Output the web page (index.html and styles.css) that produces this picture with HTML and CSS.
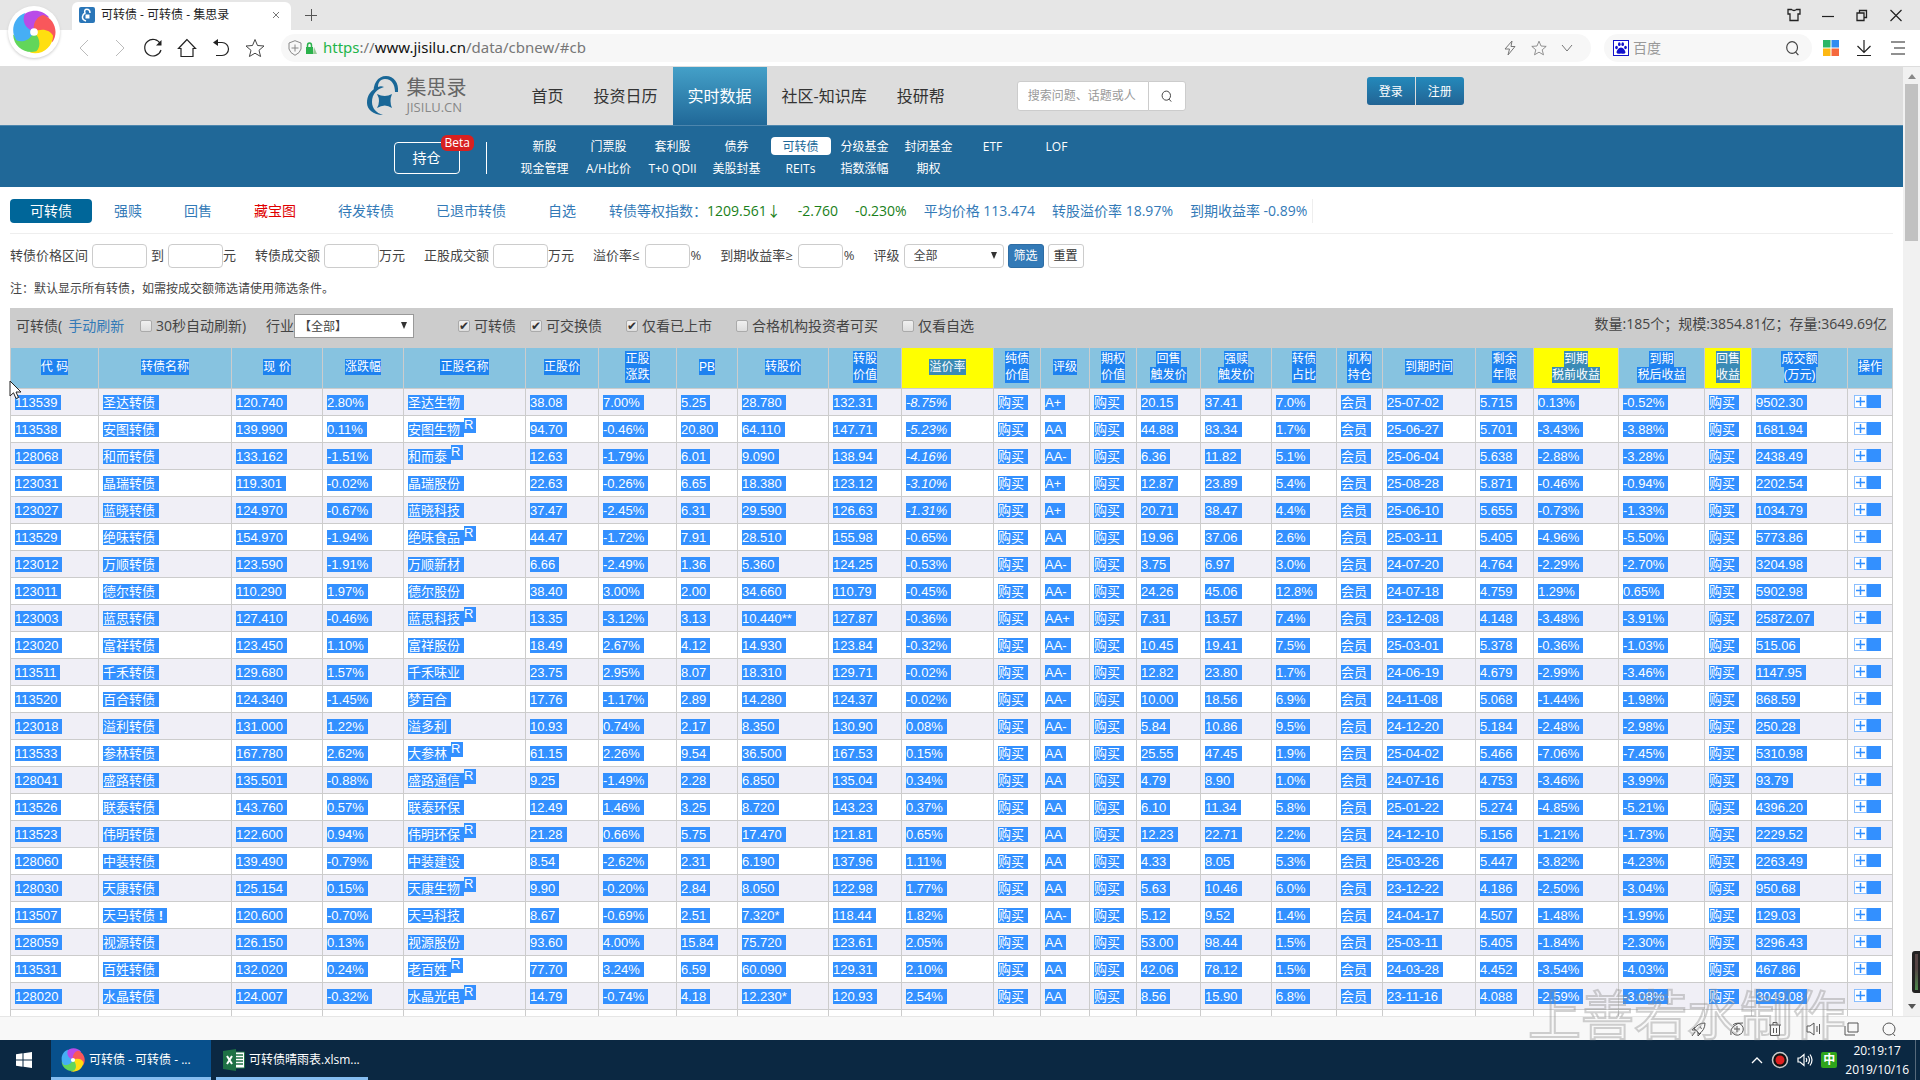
FILE: index.html
```html
<!DOCTYPE html>
<html lang="zh-CN">
<head>
<meta charset="utf-8">
<title>可转债 - 可转债 - 集思录</title>
<link rel="stylesheet" href="styles.css">
</head>
<body>
<svg width="0" height="0" class="defs" aria-hidden="true">
  <symbol id="wheel" viewBox="-20 -20 40 40">
    <g>
      <path fill="#b94be8" d="M0 0C-8-1-13-7-12-13C-6-21 7-22 14-13C7-14 1-10 0 0Z"/>
      <path fill="#f9575b" transform="rotate(72)" d="M0 0C-8-1-13-7-12-13C-6-21 7-22 14-13C7-14 1-10 0 0Z"/>
      <path fill="#ffdf10" transform="rotate(144)" d="M0 0C-8-1-13-7-12-13C-6-21 7-22 14-13C7-14 1-10 0 0Z"/>
      <path fill="#62d65a" transform="rotate(216)" d="M0 0C-8-1-13-7-12-13C-6-21 7-22 14-13C7-14 1-10 0 0Z"/>
      <path fill="#46aef5" transform="rotate(288)" d="M0 0C-8-1-13-7-12-13C-6-21 7-22 14-13C7-14 1-10 0 0Z"/>
    </g>
    <circle r="3.500" fill="#fff"/>
  </symbol>
  <symbol id="mark" viewBox="0 0 32 40">
    <path fill="currentColor" d="M7 19C5 8 11 0 19 0C27 0 32 7 31 16L28 16C28 9 25 3 18 3C13 3 11 7 11 11C13 10 15 10 17 11C10 13 5 18 5 26C5 32 9 37 16 39C6 39 0 33 0 27C0 20 3 16 7 13Z"/>
    <path fill="currentColor" d="M10 18Q18 22 25 18Q22 25 25 32Q18 27 10 32Q14 25 10 18Z"/>
  </symbol>
  <symbol id="star" viewBox="0 0 20 20"><path fill="none" stroke="currentColor" d="M10 1.500L12.500 7.500L19 8L14 12.300L15.600 18.500L10 15.200L4.400 18.500L6 12.300L1 8L7.500 7.500Z"/></symbol>
  <symbol id="search" viewBox="0 0 20 20"><path fill="none" stroke="currentColor" stroke-width="1.300" d="M9 3A6 6.500 0 1 0 9 16A6 6.500 0 1 0 9 3ZM13 14.500L16 18"/></symbol>
</svg>

<header class="chrome">
  <div class="tabstrip">
    <div class="tab">
      <svg class="favicon" viewBox="0 0 16 16"><rect width="16" height="16" rx="2" fill="#2a76b8"/><path fill="none" stroke="#fff" stroke-width="1.500" d="M7 14C1 12 4 7 6 6C4 1 11 1 11 6"/><path fill="#fff" d="M6.500 7.500H10.500V11.500H6.500Z"/></svg>
      <span class="tab-title">可转债 - 可转债 - 集思录</span>
      <button class="icon-btn small" aria-label="关闭标签"><svg width="8" height="8" viewBox="0 0 8 8"><path stroke="#777" d="M1 1L7 7M7 1L1 7"/></svg></button>
    </div>
    <button class="icon-btn plus" aria-label="新标签"><svg width="12" height="12" viewBox="0 0 12 12"><path stroke="#555" d="M0 6.500H12M6.500 0V12"/></svg></button>
    <div class="window-buttons">
      <button class="icon-btn" aria-label="皮肤"><svg width="14" height="14" viewBox="0 0 14 14"><path fill="none" stroke="#222" stroke-width="1.300" d="M1 1.500H4.500Q7 3.500 9.500 1.500H13V6H11V12.500H3V6H1Z"/></svg></button>
      <button class="icon-btn" aria-label="最小化"><svg width="14" height="14" viewBox="0 0 14 14"><path stroke="#222" stroke-width="1.200" d="M1 8.500H13"/></svg></button>
      <button class="icon-btn" aria-label="还原"><svg width="14" height="14" viewBox="0 0 14 14"><path fill="none" stroke="#222" stroke-width="1.300" d="M2 5H9V12.500H2ZM4.500 5V2.500H11.500V9.500H9"/></svg></button>
      <button class="icon-btn" aria-label="关闭"><svg width="14" height="14" viewBox="0 0 14 14"><path stroke="#222" stroke-width="1.200" d="M1.500 2L12.500 13M12.500 2L1.500 13"/></svg></button>
    </div>
  </div>
  <div class="toolbar">
    <div class="nav-icons">
      <button class="icon-btn" aria-label="后退"><svg width="20" height="20" viewBox="0 0 20 20"><path fill="none" stroke="#bbb" d="M13 2L5 10L13 18"/></svg></button>
      <button class="icon-btn" aria-label="前进"><svg width="20" height="20" viewBox="0 0 20 20"><path fill="none" stroke="#bbb" d="M7 2L15 10L7 18"/></svg></button>
      <button class="icon-btn" aria-label="刷新"><svg width="20" height="20" viewBox="0 0 20 20"><path fill="none" stroke="#222" stroke-width="1.200" d="M17.500 6A8.300 8.300 0 1 0 18 12"/><path fill="#222" d="M18.500 2V7.500H13Z"/></svg></button>
      <button class="icon-btn" aria-label="主页"><svg width="20" height="20" viewBox="0 0 20 20"><path fill="none" stroke="#222" stroke-width="1.200" d="M10 1.500L1.500 10.500H4V18.500H16V10.500H18.500Z"/></svg></button>
      <button class="icon-btn" aria-label="恢复"><svg width="20" height="20" viewBox="0 0 20 20"><path fill="none" stroke="#222" stroke-width="1.200" d="M5 4.500H11A6.500 6.500 0 0 1 11 17.500H5"/><path fill="#222" d="M2 4.500L7 1V8Z"/></svg></button>
      <button class="icon-btn" aria-label="收藏"><svg width="20" height="20"><use href="#star"/></svg></button>
    </div>
    <div class="address">
      <svg width="14" height="16" viewBox="0 0 14 16"><path fill="none" stroke="#888" d="M7 .7L13 3V9Q12 13 7 15.300Q2 13 1 9V3ZM7 4.500V11.500M3.500 8H10.500"/></svg>
      <svg width="12" height="14" viewBox="0 0 12 14"><path fill="none" stroke="#2bb24c" stroke-width="1.500" d="M2.500 7V4.500Q2.500 2 4.500 2Q6.500 2 6.500 4.500V7"/><path fill="#2bb24c" d="M1 6H8V13H1Z"/><path fill="#9c9" d="M9 6L12 13H8Z"/></svg>
      <span class="url"><b>https</b>://<i>www.jisilu.cn</i>/data/cbnew/#cb</span>
      <span class="address-tools">
        <svg width="14" height="16" viewBox="0 0 14 16"><path fill="none" stroke="#777" d="M9 1L2 9H6.500L5 15L12 6.500H8Z"/></svg>
        <svg width="16" height="16"><use href="#star"/></svg>
        <svg width="12" height="8" viewBox="0 0 12 8"><path fill="none" stroke="#777" d="M1 1L6 7L11 1"/></svg>
      </span>
    </div>
    <div class="engine">
      <svg width="16" height="16" viewBox="0 0 16 16"><rect x=".5" y=".5" width="15" height="15" fill="#fff" stroke="#11c"/><g fill="#11c"><path d="M8 7.500C10 7.500 12.500 10.500 12.500 12.500Q12 14.500 8 13.500Q4 14.500 3.500 12.500C3.500 10.500 6 7.500 8 7.500Z"/><ellipse cx="3.500" cy="7.500" rx="1.300" ry="1.700"/><ellipse cx="6.300" cy="4.200" rx="1.300" ry="1.900"/><ellipse cx="9.700" cy="4.200" rx="1.300" ry="1.900"/><ellipse cx="12.500" cy="7.500" rx="1.300" ry="1.700"/></g></svg>
      <input type="text" aria-label="百度搜索" placeholder="百度">
      <svg width="18" height="18" class="dark"><use href="#search"/></svg>
    </div>
    <div class="menu-icons">
      <svg width="16" height="16" viewBox="0 0 16 16"><path fill="#2cb666" d="M0 0H7.500V7.500H0Z"/><path fill="#2f8cf0" d="M8.500 0H16V7.500H8.500Z"/><path fill="#fdb813" d="M0 8.500H7.500V16H0Z"/><path fill="#f5683c" d="M8.500 8.500H16V16H8.500Z"/></svg>
      <svg width="16" height="16" viewBox="0 0 16 16"><path fill="none" stroke="#222" stroke-width="1.200" d="M8 0V12M1.500 6L8 12.500L14.500 6M1 15.500H15"/></svg>
      <svg width="14" height="14" viewBox="0 0 14 14"><path stroke="#222" stroke-width="1.200" d="M0 1H14M3 7H14M0 13H14"/></svg>
    </div>
  </div>
  <div class="orb"><svg width="44" height="44"><use href="#wheel"/></svg></div>
</header>

<div class="viewport">
  <div class="page">
    <div class="site-head">
      <div class="container">
        <a class="brand" href="#">
          <svg width="32" height="40"><use href="#mark"/></svg>
          <span><span class="brand-cn">集思录</span><span class="brand-en">JISILU.CN</span></span>
        </a>
        <nav class="main-nav">
          <a href="#">首页</a><a href="#">投资日历</a><a href="#" class="on">实时数据</a><a href="#">社区-知识库</a><a href="#">投研帮</a>
        </nav>
        <form class="site-search">
          <input type="text" aria-label="搜索" placeholder="搜索问题、话题或人">
          <button type="button" aria-label="搜索"><svg width="14" height="14"><use href="#search"/></svg></button>
        </form>
        <div class="auth"><button>登录</button><button>注册</button></div>
      </div>
    </div>
    <div class="sub-head">
      <div class="container">
        <button class="position">持仓<span class="beta">Beta</span></button>
        <nav class="sub-nav">
          <a href="#">新股</a><a href="#">门票股</a><a href="#">套利股</a><a href="#">债券</a><a href="#" class="on">可转债</a><a href="#">分级基金</a><a href="#">封闭基金</a><a href="#">ETF</a><a href="#">LOF</a>
          <a href="#">现金管理</a><a href="#">A/H比价</a><a href="#">T+0 QDII</a><a href="#">美股封基</a><a href="#">REITs</a><a href="#">指数涨幅</a><a href="#">期权</a>
        </nav>
      </div>
    </div>

    <main>
      <div class="data-tabs">
        <a href="#" class="on">可转债</a><a href="#">强赎</a><a href="#">回售</a><a href="#" class="hot">藏宝图</a><a href="#">待发转债</a><a href="#">已退市转债</a><a href="#">自选</a>
        <div class="index"><span>转债等权指数：<em>1209.561↓</em></span><em>-2.760</em><em>-0.230%</em><span>平均价格 113.474</span><span>转股溢价率 18.97%</span><span>到期收益率 -0.89%</span></div>
      </div>

      <form class="filters">
        <div class="group"><label for="p1">转债价格区间</label><input id="p1" type="text"><label for="p2">到</label><input id="p2" type="text"><span class="unit">元</span></div>
        <div class="group"><label for="v1">转债成交额</label><input id="v1" type="text"><span class="unit">万元</span></div>
        <div class="group"><label for="v2">正股成交额</label><input id="v2" type="text"><span class="unit">万元</span></div>
        <div class="group rate"><label for="r1">溢价率≤</label><input id="r1" type="text"><span class="unit">%</span></div>
        <div class="group rate"><label for="r2">到期收益率≥</label><input id="r2" type="text"><span class="unit">%</span></div>
        <div class="group"><label for="lv">评级</label><span class="select"><select id="lv"><option>全部</option></select></span><button type="button" class="primary">筛选</button><button type="button">重置</button></div>
      </form>
      <p class="note">注：默认显示所有转债，如需按成交额筛选请使用筛选条件。</p>

      <div class="table-bar">
        <span class="refresh">可转债(<a href="#">手动刷新</a></span>
        <label class="auto"><input type="checkbox">30秒自动刷新)</label>
        <span class="industry"><label for="ind">行业</label><span class="select wide"><select id="ind"><option>【全部】</option></select></span></span>
        <div class="checks">
          <label class="c1"><input type="checkbox" checked>可转债</label>
          <label class="c2"><input type="checkbox" checked>可交换债</label>
          <label class="c3"><input type="checkbox" checked>仅看已上市</label>
          <label class="c3"><input type="checkbox">合格机构投资者可买</label>
          <label><input type="checkbox">仅看自选</label>
        </div>
        <span class="total">数量:185个；规模:3854.81亿；存量:3649.69亿</span>
      </div>

      <table class="bonds">
        <colgroup id="cols"></colgroup>
        <thead><tr id="head"></tr></thead>
        <tbody id="rows"></tbody>
      </table>
    </main>
  </div>
  <div class="scrollbar"><i class="up"></i><i class="thumb"></i><i class="down"></i></div>
</div>

<footer class="statusbar">
  <svg viewBox="0 0 16 16"><path d="M6 10L3 8Q7 2 14 2Q14 9 8 13ZM5 9L1 9L4 6M7 11L7 15L10 12M9.500 5.500A1 1 0 1 0 11 7M4 11L1 15"/></svg>
  <svg viewBox="0 0 16 16"><path d="M4 4A6 6 0 1 1 3 11M8 5V11M5 8H11M2 14Q1 8 5 5Q9 1 14 2"/></svg>
  <svg viewBox="0 0 16 16"><path d="M2 4H14M6 4V1.500H10V4M3.500 4V14.500H12.500V4M6.500 7V12M9.500 7V12"/></svg>
  <svg viewBox="0 0 16 16"><path d="M2 5V11H5L9 14V2L5 5ZM12 5V11M14.500 3V13"/></svg>
  <svg viewBox="0 0 16 16"><path d="M5 2H15V11H5ZM2 5V14H12"/></svg>
  <svg viewBox="0 0 16 16"><path d="M8 2A6 6 0 1 0 8 14A6 6 0 1 0 8 2ZM12 12.500L14 15"/></svg>
</footer>

<div class="taskbar">
  <button class="start" aria-label="开始"><svg width="16" height="16" viewBox="0 0 16 16"><path fill="#fff" d="M0 2.200L6.500 1.300V7.500H0ZM7.500 1.200L16 0V7.500H7.500ZM0 8.500H6.500V14.700L0 13.800ZM7.500 8.500H16V16L7.500 14.800Z"/></svg></button>
  <button class="app active"><svg width="24" height="24"><use href="#wheel"/></svg>可转债 - 可转债 - ...</button>
  <button class="app excel"><svg width="22" height="22" viewBox="0 0 22 22"><path fill="#fff" stroke="#1e7145" d="M12 3H21.500V19H12Z"/><path stroke="#1e7145" stroke-width="1.300" d="M13 6H20M13 9H20M13 12H20M13 15H20"/><path fill="#1e7145" d="M0 2L13 0V22L0 20Z"/><path stroke="#fff" stroke-width="2" d="M4 7L9 15M9 7L4 15"/></svg>可转债晴雨表.xlsm...</button>
  <div class="tray">
    <svg width="12" height="8" viewBox="0 0 12 8"><path fill="none" stroke="#fff" stroke-width="1.300" d="M1 7L6 2L11 7"/></svg>
    <svg width="18" height="18" viewBox="0 0 18 18"><circle cx="9" cy="9" r="7.500" fill="#111" stroke="#ccc" stroke-width="1.500"/><circle cx="9" cy="9" r="4.500" fill="#e02020"/></svg>
    <svg width="16" height="16" viewBox="0 0 16 16"><path fill="none" stroke="#fff" stroke-width="1.200" d="M1 6V10H3L7 13.500V2.500L3 6ZM9 6Q10.500 8 9 10M11 4Q14 8 11 12M13 2.500Q17 8 13 13.500"/></svg>
    <span class="ime">中</span>
    <time class="clock">20:19:17<br>2019/10/16</time>
  </div>
</div>

<div class="watermark">上善若水制作</div>
<div class="meter"></div>
<svg class="cursor" width="13" height="20" viewBox="0 0 13 20"><path fill="#fff" stroke="#222" d="M1 1V16L4.500 12.800L7 18.500L9.500 17.500L7 12H12Z"/></svg>
<script src="table.js"></script>
</body>
</html>
```
FILE: styles.css
```css
* { box-sizing: border-box; }
body {
  margin: 0;
  height: 100vh;
  display: flex;
  flex-direction: column;
  overflow: hidden;
  background: #fff;
  color: #444;
  font: 14px/20px "Open Sans", "Noto Sans CJK SC", sans-serif;
}
a { color: #337ab7; text-decoration: none; }
button, input, select { font: inherit; color: inherit; margin: 0; }
svg { display: block; flex: none; }
em, i { font-style: normal; }
.defs { position: absolute; }

/* Browser frame */
.chrome { position: relative; border-bottom: 1px solid #ddd; }
.tabstrip {
  height: 30px;
  display: flex;
  align-items: center;
  padding-left: 72px;
  background: #e6e6e6;
}
.tab {
  width: 219px;
  height: 28px;
  align-self: flex-end;
  display: flex;
  align-items: center;
  gap: 6px;
  padding: 0 10px 2px 7px;
  background: #fff;
  border-radius: 6px 6px 0 0;
}
.favicon { width: 16px; height: 16px; }
.tab-title { flex: 1; font-size: 12px; color: #222; white-space: nowrap; }
.icon-btn {
  display: flex;
  align-items: center;
  justify-content: center;
  width: 20px;
  height: 20px;
  padding: 0;
  border: 0;
  background: none;
}
.icon-btn.small { width: 10px; }
.plus { margin-left: 10px; }
.window-buttons { margin-left: auto; display: flex; gap: 14px; padding-right: 14px; }
.toolbar { height: 36px; display: flex; align-items: center; padding-left: 75px; }
.nav-icons { display: flex; gap: 14px; width: 206px; }
.address {
  flex: 1;
  height: 28px;
  display: flex;
  align-items: center;
  padding: 0 18px 0 7px;
  gap: 3px;
  border-radius: 14px;
  background: #f7f7f7;
}
.url { margin-left: 3px; font-family: "Noto Sans", sans-serif; font-size: 15px; line-height: 18px; padding-bottom: 2px; color: #777; }
.url b { font-weight: 400; color: #1fb54a; }
.url i { color: #111; }
.address-tools { margin-left: auto; display: flex; align-items: center; gap: 14px; color: #777; }
.engine {
  width: 208px;
  height: 28px;
  margin-left: 13px;
  padding: 0 10px 0 9px;
  display: flex;
  align-items: center;
  gap: 4px;
  border-radius: 14px;
  background: #f7f7f7;
}
.engine input { flex: 1; min-width: 0; padding: 0; border: 0; background: none; }
.engine input::placeholder { color: #999; opacity: 1; }
.dark { color: #444; }
.menu-icons { display: flex; align-items: center; gap: 17px; padding: 0 15px 0 11px; }
.menu-icons svg:last-child { margin-left: 2px; }
.orb {
  position: absolute;
  left: 8px;
  top: 6px;
  width: 52px;
  height: 52px;
  display: flex;
  align-items: center;
  justify-content: center;
  border-radius: 50%;
  background: #fff;
  box-shadow: 0 1px 3px #ccc;
}

/* Site header */
.viewport { flex: 1; min-height: 0; display: flex; overflow: hidden; }
.page { flex: 1; min-width: 0; overflow: hidden; }
.container { width: 1170px; margin: 0 auto; display: flex; }
.site-head { background: #ddd; }
.site-head .container { height: 58px; }
.brand { display: flex; gap: 8px; width: 150px; padding-top: 9px; color: #196797; }
.brand-cn { display: block; font-size: 20px; line-height: 24px; color: #666; }
.brand-en { display: block; font-size: 13px; line-height: 14px; color: #888; }
.main-nav { display: flex; }
.main-nav a { padding: 0 15px; font-size: 16px; line-height: 58px; color: #333; white-space: nowrap; }
.main-nav .on { color: #fff; background: linear-gradient(#44a0c8, #206898); }
.site-search { display: flex; width: 169px; height: 30px; margin: 14px 0 0 57px; }
.site-search input {
  width: 132px;
  padding: 0 10px;
  border: 1px solid #ccc;
  border-radius: 3px 0 0 3px;
  background: #fff;
  font-size: 12px;
}
.site-search input::placeholder { color: #999; opacity: 1; }
.site-search button {
  width: 38px;
  margin-left: -1px;
  padding: 0 11px;
  border: 1px solid #ccc;
  border-radius: 0 3px 3px 0;
  background: #fff;
  color: #333;
}
.auth { display: flex; gap: 1px; margin: 10px 0 0 181px; }
.auth button {
  width: 48px;
  height: 28px;
  padding: 1px 0 0;
  border: 0;
  border-radius: 3px 0 0 3px;
  background: linear-gradient(#2489bb, #226494);
  color: #fff;
  font-size: 12px;
}
.auth button + button { border-radius: 0 3px 3px 0; }
.sub-head { background: #206898; border-top: 1px solid #4d86ad; }
.sub-head .container { height: 61px; padding: 11px 0 0 27px; }
.position {
  position: relative;
  width: 66px;
  height: 32px;
  margin-top: 5px;
  padding: 0;
  border: 1px solid #fff;
  border-radius: 4px;
  background: none;
  color: #fff;
}
.beta {
  position: absolute;
  left: 46px;
  top: -8px;
  padding: 0 4px;
  border-radius: 6px;
  background: #d8201f;
  font-size: 12px;
  line-height: 16px;
}
.sub-nav {
  display: grid;
  grid-template-columns: repeat(9, 64px);
  grid-auto-rows: 18px;
  row-gap: 4px;
  margin-left: 26px;
  padding-left: 27px;
  position: relative;
}
.sub-nav::before { content: ""; position: absolute; left: 0; top: 5px; height: 32px; border-left: 1px solid #fff; }
.sub-nav a { margin: 0 2px; text-align: center; font-size: 12px; line-height: 20px; color: #fff; white-space: nowrap; }
.sub-nav .on { border-radius: 4px; background: #fff; color: #206898; }

/* Data page */
main { padding: 0 10px; }
.data-tabs {
  display: flex;
  align-items: center;
  gap: 42px;
  height: 47px;
  padding-top: 1px;
  border-bottom: 1px solid #eee;
  white-space: nowrap;
}
.data-tabs .on {
  width: 82px;
  margin-right: -20px;
  border-radius: 4px;
  background: #069;
  color: #fff;
  line-height: 24px;
  text-align: center;
}
.data-tabs .hot { color: #e00000; }
.index { display: flex; gap: 17px; margin-left: -9px; padding-right: 5px; border-right: 1px solid #eee; color: #337ab7; line-height: 24px; }
.index em { color: #1a7f1a; }
.filters { display: flex; gap: 19px; margin-top: 10px; font-size: 13px; line-height: 22px; white-space: nowrap; }
.group { display: flex; gap: 4px; }
.group input {
  width: 55px;
  height: 24px;
  border: 1px solid #ccc;
  border-radius: 4px;
  background: #fff;
}
.rate { gap: 5px; }
.rate input { width: 45px; }
.unit { margin-left: -4px; }
.select { position: relative; display: inline-block; }
.select select {
  appearance: none;
  width: 100px;
  height: 24px;
  padding: 0 9px;
  border: 1px solid #ccc;
  border-radius: 4px;
  background: #fff;
  font-size: 12px;
}
.select::after {
  content: "";
  position: absolute;
  right: 7px;
  top: 8px;
  border: 3px solid transparent;
  border-top: 7px solid #333;
  border-bottom: 0;
}
.group button {
  width: 36px;
  height: 24px;
  padding: 0;
  border: 1px solid #ccc;
  border-radius: 3px;
  background: #fff;
  color: #333;
  font-size: 12px;
  line-height: 22px;
}
.group .primary { border-color: #2e6da4; background: #337ab7; color: #fff; }
.note { margin: 11px 0 9px; font-size: 12px; line-height: 20px; }
.table-bar {
  display: flex;
  height: 39px;
  padding: 0 6px;
  background: #ccc;
  line-height: 36px;
  white-space: nowrap;
}
.table-bar input {
  appearance: none;
  width: 12px;
  height: 12px;
  border: 1px solid #aaa;
  border-radius: 2px;
  background: linear-gradient(#f0f0f0, #ddd);
  color: #333;
  font-size: 12px;
  line-height: 10px;
}
.table-bar input:checked::after { content: "✔"; }
.table-bar label { display: flex; align-items: center; gap: 4px; height: 36px; }
.refresh { display: flex; gap: 6px; width: 124px; }
.auto { width: 126px; }
.industry { display: flex; width: 192px; }
.wide { padding-top: 6px; line-height: 24px; }
.wide select { width: 120px; padding: 0 4px; border-color: #999; border-radius: 0; }
.wide::after { top: 14px; }
.checks { display: flex; }
.checks .c1 { margin-right: 14px; }
.checks .c2, .checks .c3 { margin-right: 24px; }
.total { margin-left: auto; line-height: 32px; }

.bonds {
  width: 100%;
  table-layout: fixed;
  border-collapse: collapse;
  color: #fff;
  font: 13px/15px "Liberation Sans", "Noto Sans CJK SC", sans-serif;
  white-space: nowrap;
}
.bonds th, .bonds td { border: 1px solid #ccc; }
.bonds th {
  height: 41px;
  padding: 0 0 2px;
  background: #87c3e0;
  font-size: 12px;
  font-weight: 400;
  line-height: 16px;
}
.bonds th span { display: table; margin: 0 auto; padding-right: 3px; background: #1e82f0; }
.bonds .key { background: #ff0; }
.bonds .key span { background: #3b8bb5; }
.bonds td { height: 27px; padding: 0 0 5px 4px; text-align: left; vertical-align: bottom; }
.bonds td > span { display: inline-block; height: 15px; padding-right: 4px; background: #3390ff; vertical-align: bottom; }
.bonds td > span > a { color: #fff; }
.bonds sup { display: inline-block; width: 12px; height: 15px; background: #3390ff; font-size: 13px; line-height: 14px; vertical-align: 5px; }
.bonds tbody tr:nth-child(odd) { background: #f0eff6; }
.bonds tbody tr:last-child { background: #fff; }
.bonds .italic { font-style: italic; }
.add { display: block; width: 27px; height: 13px; margin: 0 0 2px 2px; padding: 0; border: 0; background: #3390ff; }

.scrollbar {
  width: 17px;
  display: flex;
  flex-direction: column;
  align-items: center;
  background: #f1f1f1;
}
.scrollbar i { border: 4px solid transparent; }
.scrollbar .up { margin-top: 3px; border-bottom: 5px solid #888; }
.scrollbar .thumb { width: 13px; height: 157px; margin-top: 5px; border: 0; background: #c1c1c1; }
.scrollbar .down { margin: auto 0 3px; border-top: 5px solid #555; }

/* Bottom bars */
.statusbar {
  height: 24px;
  display: flex;
  align-items: center;
  justify-content: flex-end;
  gap: 22px;
  padding-right: 23px;
  border-top: 1px solid #e6e6e6;
  background: #f8f8f8;
}
.statusbar svg { width: 16px; height: 16px; fill: none; stroke: #555; }
.taskbar { height: 40px; display: flex; background: #0b2842; color: #fff; font-size: 12px; }
.start { width: 51px; padding: 0 0 0 16px; border: 0; background: none; }
.app {
  display: flex;
  align-items: center;
  gap: 4px;
  width: 160px;
  padding: 3px 0 0 10px;
  border: 0;
  border-bottom: 3px solid #85bdf0;
  background: none;
  white-space: nowrap;
}
.active { background: #08508c; }
.excel { width: 152px; margin-left: 5px; padding-left: 7px; }
.tray { margin-left: auto; display: flex; align-items: center; gap: 8px; margin-right: 4px; padding-right: 6px; border-right: 1px solid #56697b; }
.ime { width: 16px; height: 16px; border-radius: 2px; background: #2fa51c; line-height: 15px; text-align: center; font-weight: 700; }
.clock { line-height: 19px; text-align: center; }

.watermark {
  position: absolute;
  right: 74px;
  bottom: 38px;
  color: transparent;
  font: 53px/60px "Noto Sans CJK SC", sans-serif;
  -webkit-text-stroke: 2px rgba(140, 140, 140, .4);
  pointer-events: none;
}
.meter {
  position: absolute;
  right: 0;
  top: 951px;
  width: 8px;
  height: 42px;
  border: 3px solid #222;
  border-right-width: 2px;
  border-radius: 3px 0 0 3px;
  background: linear-gradient(#544 40%, #4c8a4c);
}
.cursor { position: absolute; left: 9px; top: 380px; }
```
FILE: table.js
```js
const widths = [88,133,91,81,122,73,78,61,91,73,92,47,49,47,64,71,65,46,93,58,85,86,47,96,45];
const heads = ["代 码","转债名称","现 价","涨跌幅","正股名称","正股价","正股|涨跌","PB","转股价","转股|价值","*溢价率","纯债|价值","评级","期权|价值","回售|触发价","强赎|触发价","转债|占比","机构|持仓","到期时间","剩余|年限","*到期|税前收益","到期|税后收益","*回售|收益","成交额|(万元)","操作"];

// code, name, price, change, stock, stock price, stock change, PB, conversion price,
// conversion value, premium, rating, put, call, share, maturity, years, yields, volume
const data = `113539,圣达转债,120.740,2.80%,圣达生物,38.08,7.00%,5.25,28.780,132.31,-8.75%,A+,20.15,37.41,7.0%,25-07-02,5.715,0.13%,-0.52%,9502.30
113538,安图转债,139.990,0.11%,安图生物^,94.70,-0.46%,20.80,64.110,147.71,-5.23%,AA,44.88,83.34,1.7%,25-06-27,5.701,-3.43%,-3.88%,1681.94
128068,和而转债,133.162,-1.51%,和而泰^,12.63,-1.79%,6.01,9.090,138.94,-4.16%,AA-,6.36,11.82,5.1%,25-06-04,5.638,-2.88%,-3.28%,2438.49
123031,晶瑞转债,119.301,-0.02%,晶瑞股份,22.63,-0.26%,6.65,18.380,123.12,-3.10%,A+,12.87,23.89,5.4%,25-08-28,5.871,-0.46%,-0.94%,2202.54
123027,蓝晓转债,124.970,-0.67%,蓝晓科技,37.47,-2.45%,6.31,29.590,126.63,-1.31%,A+,20.71,38.47,4.4%,25-06-10,5.655,-0.73%,-1.33%,1034.79
113529,绝味转债,154.970,-1.94%,绝味食品^,44.47,-1.72%,7.91,28.510,155.98,-0.65%,AA,19.96,37.06,2.6%,25-03-11,5.405,-4.96%,-5.50%,5773.86
123012,万顺转债,123.590,-1.91%,万顺新材,6.66,-2.49%,1.36,5.360,124.25,-0.53%,AA-,3.75,6.97,3.0%,24-07-20,4.764,-2.29%,-2.70%,3204.98
123011,德尔转债,110.290,1.97%,德尔股份,38.40,3.00%,2.00,34.660,110.79,-0.45%,AA-,24.26,45.06,12.8%,24-07-18,4.759,1.29%,0.65%,5902.98
123003,蓝思转债,127.410,-0.46%,蓝思科技^,13.35,-3.12%,3.13,10.440**,127.87,-0.36%,AA+,7.31,13.57,7.4%,23-12-08,4.148,-3.48%,-3.91%,25872.07
123020,富祥转债,123.450,1.10%,富祥股份,18.49,2.67%,4.12,14.930,123.84,-0.32%,AA-,10.45,19.41,7.5%,25-03-01,5.378,-0.36%,-1.03%,515.06
113511,千禾转债,129.680,1.57%,千禾味业,23.75,2.95%,8.07,18.310,129.71,-0.02%,AA-,12.82,23.80,1.7%,24-06-19,4.679,-2.99%,-3.46%,1147.95
113520,百合转债,124.340,-1.45%,梦百合,17.76,-1.17%,2.89,14.280,124.37,-0.02%,AA-,10.00,18.56,6.9%,24-11-08,5.068,-1.44%,-1.98%,868.59
123018,溢利转债,131.000,1.22%,溢多利,10.93,0.74%,2.17,8.350,130.90,0.08%,AA-,5.84,10.86,9.5%,24-12-20,5.184,-2.48%,-2.98%,250.28
113533,参林转债,167.780,2.62%,大参林^,61.15,2.26%,9.54,36.500,167.53,0.15%,AA,25.55,47.45,1.9%,25-04-02,5.466,-7.06%,-7.45%,5310.98
128041,盛路转债,135.501,-0.88%,盛路通信^,9.25,-1.49%,2.28,6.850,135.04,0.34%,AA,4.79,8.90,1.0%,24-07-16,4.753,-3.46%,-3.99%,93.79
113526,联泰转债,143.760,0.57%,联泰环保,12.49,1.46%,3.25,8.720,143.23,0.37%,AA,6.10,11.34,5.8%,25-01-22,5.274,-4.85%,-5.21%,4396.20
113523,伟明转债,122.600,0.94%,伟明环保^,21.28,0.66%,5.75,17.470,121.81,0.65%,AA,12.23,22.71,2.2%,24-12-10,5.156,-1.21%,-1.73%,2229.52
128060,中装转债,139.490,-0.79%,中装建设,8.54,-2.62%,2.31,6.190,137.96,1.11%,AA,4.33,8.05,5.3%,25-03-26,5.447,-3.82%,-4.23%,2263.49
128030,天康转债,125.154,0.15%,天康生物^,9.90,-0.20%,2.84,8.050,122.98,1.77%,AA,5.63,10.46,6.0%,23-12-22,4.186,-2.50%,-3.04%,950.68
113507,天马转债 !,120.600,-0.70%,天马科技,8.67,-0.69%,2.51,7.320*,118.44,1.82%,AA-,5.12,9.52,1.4%,24-04-17,4.507,-1.48%,-1.99%,129.03
128059,视源转债,126.150,0.13%,视源股份,93.60,4.00%,15.84,75.720,123.61,2.05%,AA,53.00,98.44,1.5%,25-03-11,5.405,-1.84%,-2.30%,3296.43
113531,百姓转债,132.020,0.24%,老百姓^,77.70,3.24%,6.59,60.090,129.31,2.10%,AA,42.06,78.12,1.5%,24-03-28,4.452,-3.54%,-4.03%,467.86
128020,水晶转债,124.007,-0.32%,水晶光电^,14.79,-0.74%,4.18,12.230*,120.93,2.54%,AA,8.56,15.90,6.8%,23-11-16,4.088,-2.59%,-3.08%,3049.08`;

const addButton = '<button class="add" aria-label="加自选"><svg width="13" height="13" viewBox="0 0 13 13"><path fill="#fff" stroke="#8dc0ff" d="M.5 .5H12.500V12.500H.5Z"/><path stroke="#3390ff" stroke-width="1.500" d="M2 6.500H11M6.500 2V11"/></svg></button>';

document.getElementById("cols").innerHTML = widths.map(w => `<col style="width:${w}px">`).join("");
document.getElementById("head").innerHTML = heads.map(h => {
  const key = h[0] === "*";
  const lines = h.replace("*", "").split("|").map(t => `<span>${t}</span>`).join("");
  return `<th${key ? ' class="key"' : ""}>${lines}</th>`;
}).join("");

const body = data.split("\n").map((line, n) => {
  const c = line.split(",");
  c.splice(11, 0, "购买");
  c.splice(13, 0, "购买");
  c.splice(17, 0, "会员");
  c.splice(22, 0, "购买");
  const cells = c.map((v, i) => {
    const text = v.replace("^", "");
    const inner = i === 1 || i === 4 || text === "购买" || text === "会员" ? `<a href="#">${text.replace("!", "<b>!</b>")}</a>` : text;
    const sup = v.endsWith("^") ? "<sup>R</sup>" : "";
    return `<td${i === 10 && n < 5 ? ' class="italic"' : ""}><span>${inner}</span>${sup}</td>`;
  });
  return `<tr>${cells.join("")}<td>${addButton}</td></tr>`;
});
body.push(`<tr>${"<td></td>".repeat(25)}</tr>`);
document.getElementById("rows").innerHTML = body.join("");
```
